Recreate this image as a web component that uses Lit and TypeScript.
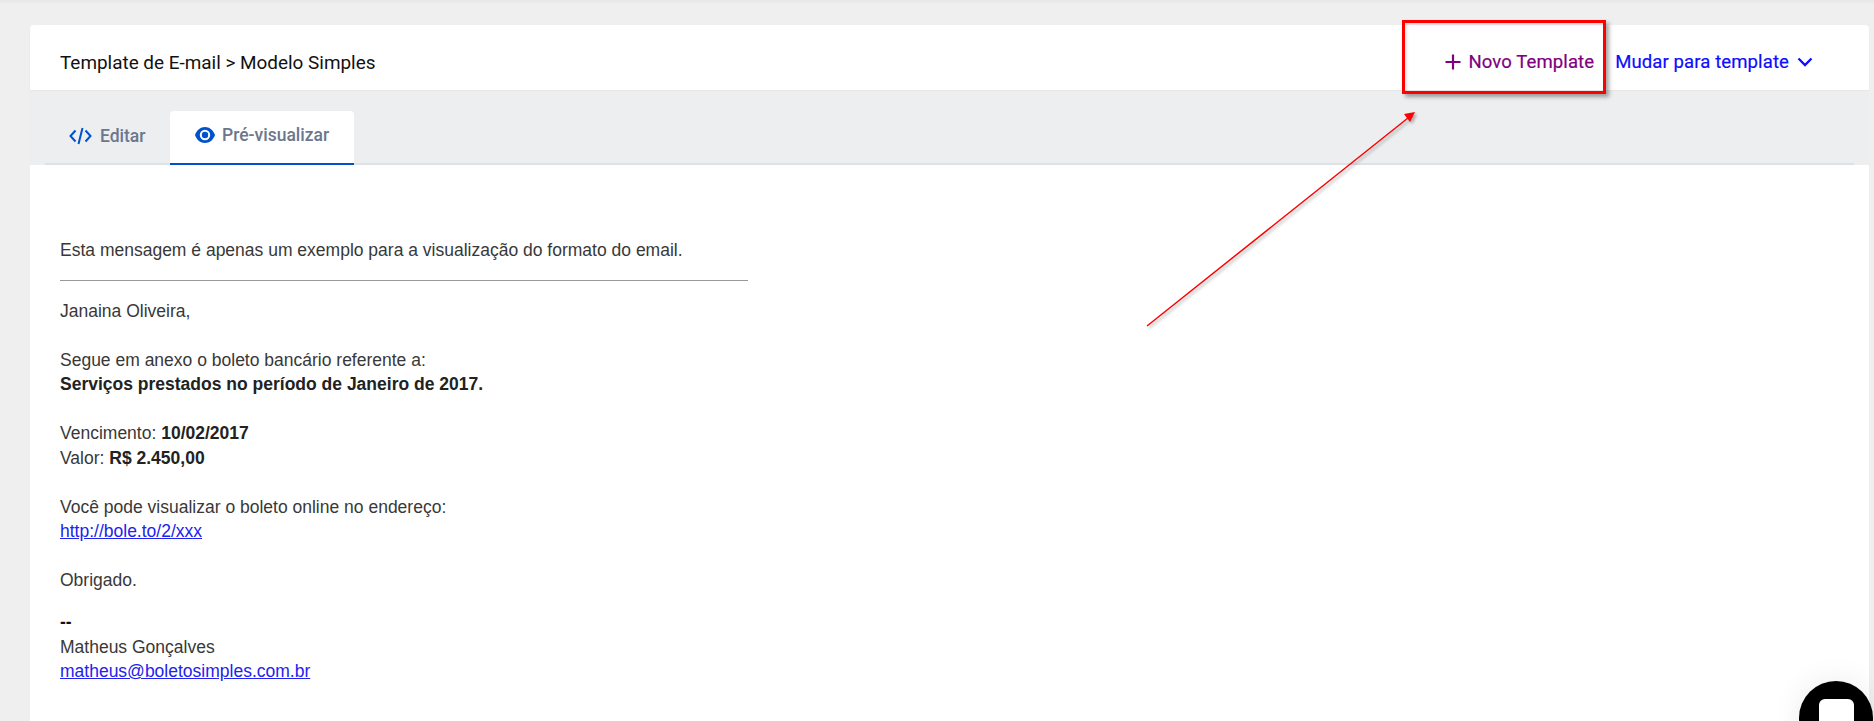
import { LitElement, html, css } from "lit";
import { customElement } from "lit/decorators.js";

@customElement("app-root")
export class AppRoot extends LitElement {
  static styles = css`
    :host { display: block; width: 1874px; height: 721px; overflow: hidden; position: relative; background: #efefef; font-family: Roboto, "Liberation Sans", sans-serif; }
    .page { height: 721px; box-sizing: border-box; padding: 25px 5px 0 30px; background: linear-gradient(#e6e6e6, #efefef 4px); }
    .card { height: 696px; display: flex; flex-direction: column; }
    .head { height: 65px; flex: none; box-sizing: border-box; background: #fff; border-radius: 4px 4px 0 0; display: flex; align-items: center; padding: 9px 56px 0 30px; box-shadow: 0 1px 2px rgba(0,0,0,.05); }
    .title { font-size: 18.92px; font-weight: 400; color: #111; flex: 1; padding-top: 1px; }
    .btn { display: flex; align-items: center; font-size: 18.55px; font-weight: 400; letter-spacing: .1px; -webkit-text-stroke: .2px currentColor; }
    .btn svg { display: block; }
    .new { color: #800080; gap: 6px; margin-right: 21px; }
    .switch { color: #0d0dff; gap: 8px; }
    .tabsbar { flex: none; height: 74px; margin-top: 1px; box-sizing: border-box; background: #edeef0; padding: 20px 15px 0; }
    .tabs { height: 54px; display: flex; box-sizing: border-box; border-bottom: 2px solid #dfe1e6; }
    .tab { height: 54px; box-sizing: border-box; display: flex; align-items: center; color: #6b778c; font-size: 17.5px; font-weight: 500; }
    .tab.plain { width: 125px; padding: 0 0 5px 24px; gap: 8px; }
    .tab.active { width: 184px; padding: 0 0 5px 25px; gap: 7px; background: #fff; border-radius: 4px 4px 0 0; border-bottom: 2px solid #0052cc; }
    .body { flex: 1; background: #fff; padding: 73px 30px 0; font-family: "Liberation Sans", Arial, sans-serif; font-size: 17.5px; line-height: 24.5px; color: #383838; }
    .body p { margin: 0 0 24.5px; }
    .body p.last { margin-bottom: 17.5px; }
    .body b { color: #222; }
    .body a { color: #2222ee; text-decoration: underline; }
    .rule { width: 688px; height: 1px; background: #999; margin: 17.5px 0; }
    .sep { color: #111; font-weight: 700; }
    .mark { position: absolute; left: 1402px; top: 20px; width: 204px; height: 74px; box-sizing: border-box; border: 3px solid #f00; box-shadow: 3px 3px 4px rgba(0,0,0,.35), inset 2px 2px 3px rgba(0,0,0,.1); }
    .arrow { position: absolute; left: 0; top: 0; overflow: visible; filter: drop-shadow(2px 2px 1.5px rgba(0,0,0,.3)); }
    .chat { position: absolute; left: 1799px; top: 681px; width: 74px; height: 74px; border-radius: 50%; background: #000; box-shadow: 0 0 30px rgba(0,0,0,.08); display: flex; justify-content: center; padding-top: 18px; box-sizing: border-box; }
    .chat i { display: block; width: 35px; height: 35px; border-radius: 6px; background: #fff; }
  `;

  render() {
    return html`
      <div class="page">
        <div class="card">
          <div class="head">
            <div class="title">Template de E-mail &gt; Modelo Simples</div>
            <div class="btn new">
              <svg width="18" height="18" viewBox="0 0 18 18" fill="none" stroke="#800080" stroke-width="2.2"><path d="M9 1.5v15M1.500 9h15"/></svg>
              <span>Novo Template</span>
            </div>
            <div class="btn switch">
              <span>Mudar para template</span>
              <svg width="16" height="10" viewBox="0 0 16 10" fill="none" stroke="#0d0dff" stroke-width="2.3"><path d="M1.500 1.500 8 8l6.500-6.500"/></svg>
            </div>
          </div>
          <div class="tabsbar">
            <div class="tabs">
              <div class="tab plain">
                <svg width="23" height="18" viewBox="0 0 23 18" fill="none" stroke="#0052cc" stroke-width="2"><path d="M6.500 3.500 1.500 9l5 5.500M16.500 3.500l5 5.500-5 5.500M13.500 1 9.500 17"/></svg>
                <span>Editar</span>
              </div>
              <div class="tab active">
                <svg width="20" height="16" viewBox="0 0 20 16"><path fill="#0052cc" fill-rule="evenodd" d="M10 0C5.500 0 1.700 3 0 8c1.700 5 5.500 8 10 8s8.300-3 10-8c-1.700-5-5.500-8-10-8Zm0 13.200A5.200 5.200 0 1 1 10 2.800a5.200 5.200 0 0 1 0 10.400Z"/><circle cx="10" cy="8" r="3.200" fill="#0052cc"/></svg>
                <span>Pré-visualizar</span>
              </div>
            </div>
          </div>
          <div class="body">
            <div>Esta mensagem é apenas um exemplo para a visualização do formato do email.</div>
            <div class="rule"></div>
            <p>Janaina Oliveira,</p>
            <p>Segue em anexo o boleto bancário referente a:<br><b>Serviços prestados no período de Janeiro de 2017.</b></p>
            <p>Vencimento: <b>10/02/2017</b><br>Valor: <b>R$ 2.450,00</b></p>
            <p>Você pode visualizar o boleto online no endereço:<br><a href="#">http://bole.to/2/xxx</a></p>
            <p class="last">Obrigado.</p>
            <div class="sep">--</div>
            <div>Matheus Gonçalves</div>
            <div><a href="#">matheus@boletosimples.com.br</a></div>
          </div>
        </div>
      </div>
      <svg class="arrow" width="1874" height="721" viewBox="0 0 1874 721">
        <path d="M1147 326 1408 118" stroke="#f00" stroke-width="1.500" fill="none"/>
        <path d="M1415 112 1404 114 1410 122Z" fill="#f00"/>
      </svg>
      <div class="mark"></div>
      <div class="chat"><i></i></div>
    `;
  }
}
